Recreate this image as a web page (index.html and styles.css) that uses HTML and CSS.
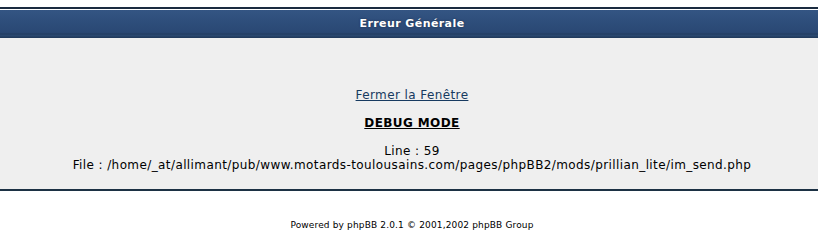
FILE: index.html
```html
<!DOCTYPE html>
<html lang="fr">
<head>
<meta charset="utf-8">
<title>Erreur Générale</title>
<link rel="stylesheet" href="styles.css">
</head>
<body>
<div class="forumline">
  <div class="thHead">Erreur Générale</div>
  <div class="row1">
    <div class="gen">
      <a class="genmed" href="#">Fermer la Fenêtre</a>
      <div class="blank"></div>
      <b><u>DEBUG MODE</u></b>
      <div class="blank"></div>
      <div>Line : 59</div>
      <div>File : /home/_at/allimant/pub/www.motards-toulousains.com/pages/phpBB2/mods/prillian_lite/im_send.php</div>
    </div>
  </div>
</div>
<div class="copyright">Powered by phpBB 2.0.1 © 2001,2002 phpBB Group</div>
</body>
</html>
```
FILE: styles.css
```css
html, body {
  margin: 0;
  padding: 0;
  background: #ffffff;
}
body {
  padding-top: 7px;
  font-family: "DejaVu Sans", Verdana, sans-serif;
  color: #000000;
}
.forumline {
  border-top: 2px solid #1a2b40;
  border-bottom: 2px solid #1c3144;
  background: #efefef;
}
.thHead {
  border-top: 1px solid #ffffff;
  height: 28px;
  line-height: 27px;
  padding-left: 6px;
  text-align: center;
  font-size: 11px;
  font-weight: bold;
  letter-spacing: 0.42px;
  color: #ffffff;
  text-shadow: 0 0 2px #1a2e4a;
  background: linear-gradient(to bottom, #345583 0%, #2e4e7b 40%, #2a4874 80%, #223d62 86%, #2b4a72 90%, #1f3859 100%);
}
.row1 {
  padding: 50px 0 17px 6px;
  text-align: center;
}
.gen {
  font-size: 12px;
  line-height: 14px;
  letter-spacing: 0.4px;
  display: flex;
  flex-direction: column;
  align-items: center;
}
.blank {
  height: 14px;
}
a.genmed {
  color: #173a60;
  text-decoration: underline;
}
.copyright {
  text-align: center;
  font-size: 9px;
  line-height: 12px;
  letter-spacing: 0.15px;
  padding: 28px 0 0 6px;
  color: #000000;
}
```
